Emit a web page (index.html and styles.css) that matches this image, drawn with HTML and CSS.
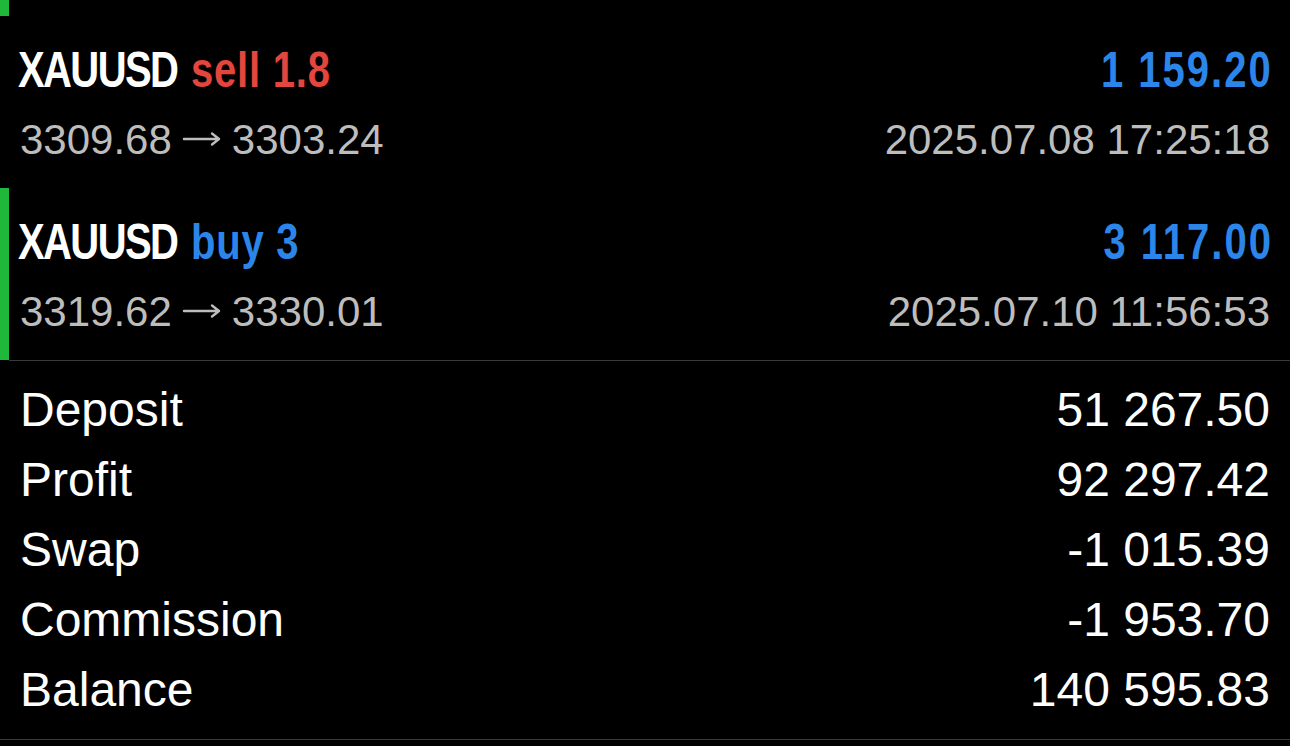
FILE: index.html
```html
<!DOCTYPE html>
<html lang="en">
<head>
<meta charset="utf-8">
<title>History</title>
<link rel="stylesheet" href="styles.css">
</head>
<body>
<div class="screen">
  <div class="tail marked"></div>

  <div class="deal">
    <div class="line">
      <div class="title"><span class="sym">XAUUSD</span><span class="sell">sell 1.8</span></div>
      <div class="title amount">1 159.20</div>
    </div>
    <div class="line sub">
      <div>3309.68<svg class="arrow" viewBox="0 0 44 20" width="44" height="20"><path d="M4 10H39M32 4.5L39 10L32 15.5" /></svg>3303.24</div>
      <div>2025.07.08 17:25:18</div>
    </div>
  </div>

  <div class="deal marked">
    <div class="line">
      <div class="title"><span class="sym">XAUUSD</span><span class="buy">buy 3</span></div>
      <div class="title amount">3 117.00</div>
    </div>
    <div class="line sub">
      <div>3319.62<svg class="arrow" viewBox="0 0 44 20" width="44" height="20"><path d="M4 10H39M32 4.5L39 10L32 15.5" /></svg>3330.01</div>
      <div>2025.07.10 11:56:53</div>
    </div>
  </div>

  <div class="divider"></div>

  <div class="summary">
    <div class="row"><span>Deposit</span><span>51 267.50</span></div>
    <div class="row"><span>Profit</span><span>92 297.42</span></div>
    <div class="row"><span>Swap</span><span>-1 015.39</span></div>
    <div class="row"><span>Commission</span><span>-1 953.70</span></div>
    <div class="row"><span>Balance</span><span>140 595.83</span></div>
  </div>

  <div class="bottom-line"></div>
</div>
</body>
</html>
```
FILE: styles.css
```css
html, body {
  margin: 0;
  padding: 0;
  background: #000;
}

.screen {
  width: 1290px;
  height: 746px;
  overflow: hidden;
  background: #000;
  color: #fff;
  font-family: "Liberation Sans", Arial, sans-serif;
}

.marked {
  background: linear-gradient(#1fb83a, #1fb83a) left top / 9px 100% no-repeat;
}

.tail {
  height: 16px;
}

.deal {
  height: 172px;
  box-sizing: border-box;
  padding: 24px 20px 0 18px;
  display: flex;
  flex-direction: column;
  gap: 15px;
}

.line {
  display: flex;
  justify-content: space-between;
  align-items: baseline;
  white-space: nowrap;
}

.title {
  display: inline-block;
  font-family: "Liberation Sans", Arial, sans-serif;
  font-weight: 700;
  font-size: 50px;
  line-height: 60px;
  transform: scaleX(0.8);
  transform-origin: left center;
}

.sym {
  color: #ffffff;
  letter-spacing: -2px;
  margin-right: 17px;
}

.sell,
.buy {
  letter-spacing: 1px;
}

.sell { color: #e2463c; }
.buy { color: #2c86ea; }

.amount {
  color: #2c86ea;
  letter-spacing: 2.5px;
  margin-right: -2.5px;
  transform-origin: right center;
}

.sub {
  font-size: 42px;
  line-height: 50px;
  color: #bdbdbd;
  padding-left: 2px;
}

.arrow {
  display: inline-block;
  width: 44px;
  height: 20px;
  margin: 0 8px 0 8px;
  vertical-align: 5px;
  fill: none;
  stroke: #bdbdbd;
  stroke-width: 2.4;
  stroke-linecap: round;
  stroke-linejoin: round;
}

.divider {
  height: 1px;
  margin-left: 9px;
  background: #3a3a3a;
}

.summary {
  padding: 14px 20px 0 20px;
  height: 378px;
  box-sizing: border-box;
}

.row {
  display: flex;
  justify-content: space-between;
  font-size: 48px;
  line-height: 70px;
  color: #fff;
  white-space: nowrap;
}

.bottom-line {
  height: 1px;
  background: #3a3a3a;
}
```
